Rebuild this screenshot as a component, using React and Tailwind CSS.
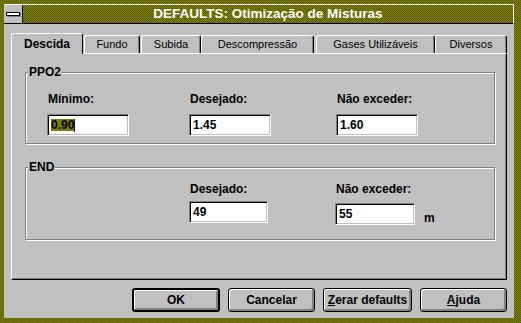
import React from "react";

const font = { fontFamily: '"Liberation Sans", Arial, sans-serif' };

const tabs = [
  { label: "Descida", w: "w-[72px]", ml: "ml-0", active: true },
  { label: "Fundo", w: "w-[56px]", ml: "ml-px" },
  { label: "Subida", w: "w-[60px]", ml: "ml-[1px]" },
  { label: "Descompressão", w: "w-[113px]", ml: "ml-0" },
  { label: "Gases Utilizáveis", w: "w-[119px]", ml: "ml-[2px]" },
  { label: "Diversos", w: "w-[72px]", ml: "ml-0" },
];

function Tab({ label, w, ml, active }) {
  if (active) {
    return (
      <div
        className={`${w} ${ml} relative z-10 h-[21px] -mb-px flex items-center justify-center bg-[#c0c0c0] border-t border-l border-white border-r border-r-black rounded-t-[3px] text-[12px] font-bold text-black`}
      >
        {label}
      </div>
    );
  }
  return (
    <div
      className={`${w} ${ml} h-[18px] mt-[2px] flex items-center justify-center bg-[#c0c0c0] border-t border-l border-white border-r border-r-black rounded-t-[3px] shadow-[inset_-1px_0_0_#808080] text-[11px] text-black`}
    >
      {label}
    </div>
  );
}

function Field({ value, w = "w-[82px]", selected }) {
  return (
    <div
      className={`${w} h-[22px] bg-white border border-t-[#808080] border-l-[#808080] border-b-white border-r-white shadow-[inset_1px_1px_0_#000,inset_-1px_-1px_0_#c0c0c0] flex items-center pl-[3px] text-[12px] font-bold text-black`}
    >
      {selected ? (
        <>
          <span className="bg-[#808000] leading-[12px]">{value}</span>
          <span className="w-px h-[13px] bg-[#0000ff]" />
        </>
      ) : (
        value
      )}
    </div>
  );
}

function Group({ title, h, children }) {
  return (
    <div
      className={`relative ${h} border border-[#808080] shadow-[inset_1px_1px_0_#fff,1px_1px_0_#fff]`}
    >
      <span className="absolute -top-[8px] left-[2px] bg-[#c0c0c0] px-px text-[12px] leading-[14px] font-bold text-black">
        {title}
      </span>
      {children}
    </div>
  );
}

function Label({ children }) {
  return <div className="text-[12px] font-bold text-black leading-[14px] pl-px">{children}</div>;
}

function Button({ w, children, def }) {
  return (
    <button
      className={`${w} h-[24px] bg-[#c0c0c0] ${
        def ? "border-2" : "border"
      } border-black rounded-[3px] shadow-[inset_1px_1px_0_#fff,inset_-2px_-2px_0_#808080] flex items-center justify-center text-[12px] font-bold text-black`}
    >
      {children}
    </button>
  );
}

export default function App() {
  return (
    <div
      style={font}
      className="w-[521px] h-[323px] flex flex-col pt-[4px] pl-[4px] pr-[7px] pb-[5px] bg-[repeating-conic-gradient(#808000_0%_25%,#5c5c10_0%_50%)] bg-size-[2px_2px]"
    >
      {/* title bar */}
      <div className="h-[20px] flex border-b border-black border-t border-t-white border-r border-r-white">
        <div className="w-[19px] bg-[#c0c0c0] border-r border-black flex items-center justify-center">
          <div className="w-[14px] h-[4px] bg-white border border-black shadow-[1px_1px_0_#808080]" />
        </div>
        <div className="flex-1 flex items-center justify-center text-white font-bold text-[13.5px] leading-none pb-px">
          DEFAULTS: Otimização de Misturas
        </div>
      </div>

      {/* client */}
      <div className="flex-1 bg-[#c0c0c0] flex flex-col pt-[9px] px-[7px]">
        <div className="flex items-start">
          {tabs.map((t) => (
            <Tab key={t.label} {...t} />
          ))}
        </div>
        <div className="h-[227px] border-t border-l border-white border-r border-b border-r-black border-b-black shadow-[inset_-1px_-1px_0_#808080] pt-[18px] pl-[13px] pr-[11px]">
          <Group title="PPO2" h="h-[72px]">
            <div className="flex pt-[19px] pl-[21px]">
              <div className="w-[142px] flex flex-col gap-[8px]">
                <Label>Mínimo:</Label>
                <Field value="0.90" selected />
              </div>
              <div className="w-[147px] flex flex-col gap-[8px]">
                <Label>Desejado:</Label>
                <Field value="1.45" />
              </div>
              <div className="flex flex-col gap-[8px]">
                <Label>Não exceder:</Label>
                <Field value="1.60" />
              </div>
            </div>
          </Group>
          <div className="h-[23px]" />
          <Group title="END" h="h-[73px]">
            <div className="flex pt-[14px] pl-[21px]">
              <div className="w-[142px]" />
              <div className="w-[146px] flex flex-col gap-[5px]">
                <Label>Desejado:</Label>
                <Field value="49" w="w-[79px]" />
              </div>
              <div className="flex flex-col gap-[5px]">
                <Label>Não exceder:</Label>
                <div className="flex items-center">
                  <Field value="55" w="w-[80px]" />
                  <span className="ml-[9px] mt-[8px] text-[12px] font-bold text-black">m</span>
                </div>
              </div>
            </div>
          </Group>
        </div>
        <div className="flex justify-end gap-[8px] mt-[8px] pr-[0px]">
          <Button w="w-[88px]" def>
            OK
          </Button>
          <Button w="w-[87px]">Cancelar</Button>
          <Button w="w-[89px]">
            <span className="underline">Z</span>erar defaults
          </Button>
          <Button w="w-[87px]">
            <span className="underline">A</span>juda
          </Button>
        </div>
      </div>
    </div>
  );
}
